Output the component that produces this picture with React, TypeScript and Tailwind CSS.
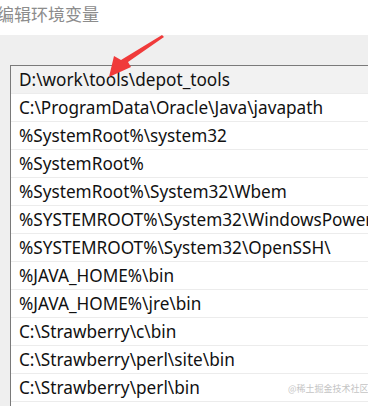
const rows = [
  "D:\\work\\tools\\depot_tools",
  "C:\\ProgramData\\Oracle\\Java\\javapath",
  "%SystemRoot%\\system32",
  "%SystemRoot%",
  "%SystemRoot%\\System32\\Wbem",
  "%SYSTEMROOT%\\System32\\WindowsPowerShell\\v1.0\\",
  "%SYSTEMROOT%\\System32\\OpenSSH\\",
  "%JAVA_HOME%\\bin",
  "%JAVA_HOME%\\jre\\bin",
  "C:\\Strawberry\\c\\bin",
  "C:\\Strawberry\\perl\\site\\bin",
  "C:\\Strawberry\\perl\\bin",
];

export default function App() {
  return (
    <div className="relative h-[406px] w-[368px] overflow-hidden bg-white font-['Noto_Sans','Noto_Sans_CJK_SC',sans-serif]">
      <div className="flex h-[35px] items-center text-[17px] leading-none text-[#8c8c8c] font-['Noto_Sans_CJK_SC',sans-serif]">
        <span className="-ml-[3px] -mt-[9px] whitespace-nowrap">编辑环境变量</span>
      </div>
      <div className="h-[371px] bg-[#efefef] pl-[10px] pt-[30px]">
        <div className="h-full border-l border-t border-[#7a7a7a] bg-white">
          {rows.map((r, i) => (
            <div
              key={r}
              className={`flex h-[28px] items-center whitespace-nowrap border-b border-[#ececec] pl-[8px] text-[17.2px] text-[#111] ${
                i === 0 ? "bg-[#f2f2f2]" : ""
              }`}
            >
              {r}
            </div>
          ))}
        </div>
      </div>
      <svg className="absolute left-0 top-0" width="368" height="406">
        <polygon points="164,37 128,62 131,67 109,77 114,56 121,60 162,35" fill="#f03a3a" />
      </svg>
      <span className="absolute left-[288px] top-[384px] whitespace-nowrap text-[9px] leading-none text-[#c4c4c4] font-['Noto_Sans_CJK_SC',sans-serif]">
        @稀土掘金技术社区
      </span>
    </div>
  );
}
